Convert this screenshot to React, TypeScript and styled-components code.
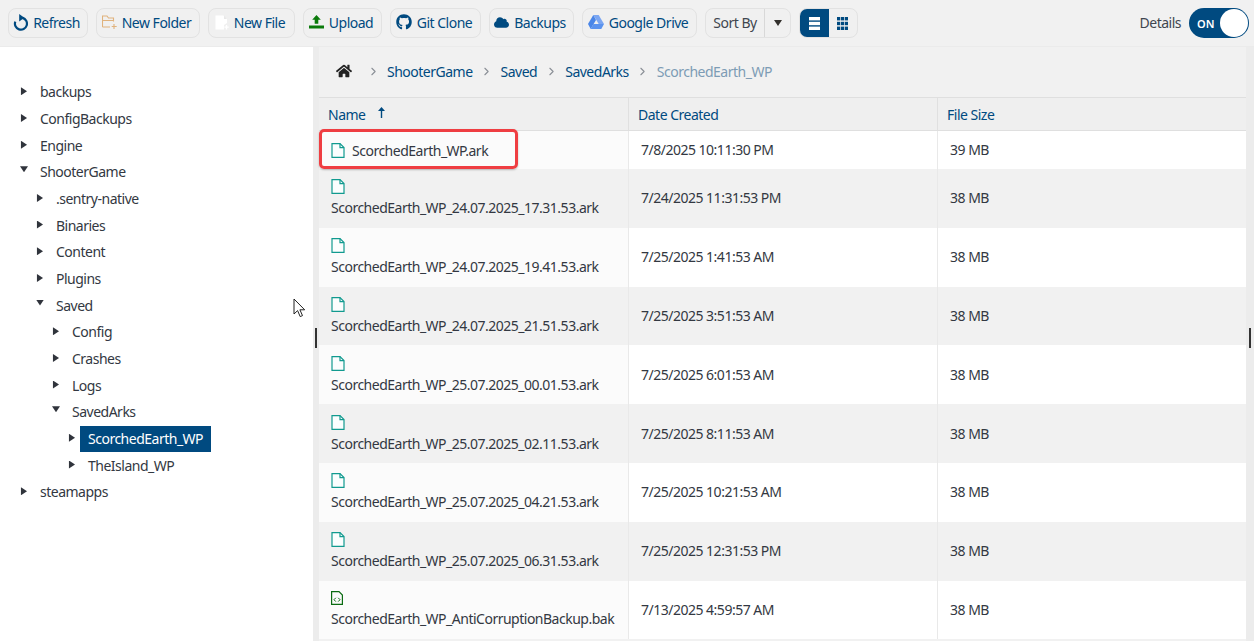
import React from "react";
import styled, { createGlobalStyle } from "styled-components";
import { FaGithub, FaCloud, FaHome } from "react-icons/fa";
import { ChevronRight } from "lucide-react";

const BLUE = "#004a80";
const INK = "#333842";

const GlobalStyle = createGlobalStyle`
  html, body {
    margin: 0;
    height: 100%;
    overflow: hidden;
    background: #f1f1f1;
  }
  body {
    font-family: "Noto Sans", "Open Sans", sans-serif;
    font-size: 14px;
    letter-spacing: -0.5px;
    color: ${INK};
  }
`;

type TreeNode = { label: string; level: number; open?: boolean; selected?: boolean };

const treeNodes: TreeNode[] = [
  { label: "backups", level: 0 },
  { label: "ConfigBackups", level: 0 },
  { label: "Engine", level: 0 },
  { label: "ShooterGame", level: 0, open: true },
  { label: ".sentry-native", level: 1 },
  { label: "Binaries", level: 1 },
  { label: "Content", level: 1 },
  { label: "Plugins", level: 1 },
  { label: "Saved", level: 1, open: true },
  { label: "Config", level: 2 },
  { label: "Crashes", level: 2 },
  { label: "Logs", level: 2 },
  { label: "SavedArks", level: 2, open: true },
  { label: "ScorchedEarth_WP", level: 3, selected: true },
  { label: "TheIsland_WP", level: 3 },
  { label: "steamapps", level: 0 },
];

const files = [
  { name: "ScorchedEarth_WP.ark", date: "7/8/2025 10:11:30 PM", size: "39 MB", inline: true },
  { name: "ScorchedEarth_WP_24.07.2025_17.31.53.ark", date: "7/24/2025 11:31:53 PM", size: "38 MB" },
  { name: "ScorchedEarth_WP_24.07.2025_19.41.53.ark", date: "7/25/2025 1:41:53 AM", size: "38 MB" },
  { name: "ScorchedEarth_WP_24.07.2025_21.51.53.ark", date: "7/25/2025 3:51:53 AM", size: "38 MB" },
  { name: "ScorchedEarth_WP_25.07.2025_00.01.53.ark", date: "7/25/2025 6:01:53 AM", size: "38 MB" },
  { name: "ScorchedEarth_WP_25.07.2025_02.11.53.ark", date: "7/25/2025 8:11:53 AM", size: "38 MB" },
  { name: "ScorchedEarth_WP_25.07.2025_04.21.53.ark", date: "7/25/2025 10:21:53 AM", size: "38 MB" },
  { name: "ScorchedEarth_WP_25.07.2025_06.31.53.ark", date: "7/25/2025 12:31:53 PM", size: "38 MB" },
  { name: "ScorchedEarth_WP_AntiCorruptionBackup.bak", date: "7/13/2025 4:59:57 AM", size: "38 MB", code: true },
];

const RefreshIcon = () => (
  <svg width="15" height="17" viewBox="0 0 15 17">
    <path d="M9.600 3.900A6 6 0 1 1 2.300 7.600" fill="none" stroke={BLUE} strokeWidth="2.200" />
    <path d="M6.200 0l5.200 3.800-5.200 3.800z" fill={BLUE} />
  </svg>
);

const NewFolderIcon = () => (
  <svg width="15" height="14" viewBox="0 0 15 14" fill="none" stroke="#e0b27c" strokeWidth="1.100">
    <path d="M.5 12V1h4.500l1.500 2h5v3.500M.5 5.500h11.500M.5 12H8" />
    <path d="M12 9v5M9.700 11.500h5" />
  </svg>
);

const NewFileIcon = () => (
  <svg width="14" height="15" viewBox="0 0 14 15">
    <path d="M.5.5h8l3.500 3.500v4l-3 2v4.500H.5z" fill="#fff" />
    <path d="M9 .5l3 3.500H9z" fill="#e8e8e8" />
    <path d="M11.500 10v4.500M9.500 12.200h4.200" stroke="#fff" strokeWidth="1.300" fill="none" />
  </svg>
);

const UploadIcon = () => (
  <svg width="15" height="14" viewBox="0 0 15 14">
    <path d="M7.500 0l4.300 4.700H9.300v4H5.700v-4H3.200z" fill="#0b7a0b" />
    <rect y="10.500" width="15" height="3" fill="#0b7a0b" />
  </svg>
);

const DriveIcon = () => (
  <svg width="16" height="14" viewBox="0 0 16 14">
    <path d="M5.300 0h5.400l5.300 9h-5.300z" fill="#7ba6f2" />
    <path d="M5.300 0L0 9l2.700 5 5.300-9z" fill="#4a86e8" />
    <path d="M2.700 14h10.600L16 9H5.400z" fill="#5b93ee" />
  </svg>
);

const ListIcon = () => (
  <svg width="11" height="13" viewBox="0 0 11 13" fill="#fff">
    <rect width="11" height="3.400" />
    <rect y="4.800" width="11" height="3.400" />
    <rect y="9.600" width="11" height="3.400" />
  </svg>
);

const GridIcon = () => (
  <svg width="11" height="13" viewBox="0 0 11 13" fill={BLUE}>
    {[0, 4.800, 9.600].map((y) =>
      [0, 3.900, 7.800].map((x) => <rect key={`${x}-${y}`} x={x} y={y} width="3.200" height="3.400" />)
    )}
  </svg>
);

const SortUpIcon = () => (
  <SortArrow width="7" height="11" viewBox="0 0 7 11">
    <path d="M3.500 0L7 4H4.200v7H2.800V4H0z" fill={BLUE} />
  </SortArrow>
);

const FileIcon = () => (
  <svg width="14" height="15" viewBox="0 0 14 15" fill="none" stroke="#119a8f" strokeWidth="1.200">
    <path d="M1 .6h8l4 4V14.400H1z" fill="#fbfefe" />
    <path d="M9 .6v4h4" />
  </svg>
);

const CodeFileIcon = () => (
  <svg width="12" height="14" viewBox="0 0 12 14" fill="none" stroke="#0a6b12" strokeWidth="1.200">
    <path d="M.6.6h7.400l3.400 3.400V13.400H.6z" />
    <path d="M4.800 6.800L3 8.700l1.800 1.900M7.200 6.800L9 8.700l-1.800 1.900" strokeWidth="1" />
  </svg>
);

const MouseCursor = () => (
  <Cursor width="13" height="20" viewBox="0 0 13 20">
    <path d="M1 1v15l3.600-3.400 2.600 6 2.300-1-2.600-5.800h4.800z" fill="#fff" stroke="#222" strokeWidth="1" />
  </Cursor>
);

const crumbs = ["ShooterGame", "Saved", "SavedArks", "ScorchedEarth_WP"];

export default function App() {
  return (
    <Page>
      <GlobalStyle />
      <Toolbar>
        <ToolButton $w={80}><RefreshIcon />Refresh</ToolButton>
        <ToolButton $w={104}><NewFolderIcon />New Folder</ToolButton>
        <ToolButton $w={87}><NewFileIcon />New File</ToolButton>
        <ToolButton $w={79}><UploadIcon />Upload</ToolButton>
        <ToolButton $w={91}><FaGithub size={16} color={BLUE} />Git Clone</ToolButton>
        <ToolButton $w={85}><FaCloud size={15} color={BLUE} />Backups</ToolButton>
        <ToolButton $w={115}><DriveIcon />Google Drive</ToolButton>
        <SplitButton>
          <SortLabel>Sort By</SortLabel>
          <SortCaret><Caret /></SortCaret>
        </SplitButton>
        <ViewGroup>
          <ViewButton $active><ListIcon /></ViewButton>
          <ViewButton><GridIcon /></ViewButton>
        </ViewGroup>
        <DetailsArea>
          <DetailsLabel>Details</DetailsLabel>
          <Switch>
            <SwitchText>ON</SwitchText>
            <SwitchKnob />
          </Switch>
        </DetailsArea>
      </Toolbar>
      <Body>
        <Sidebar>
          {treeNodes.map((node) => (
            <TreeRow key={node.label} $level={node.level}>
              <Arrow $open={node.open} />
              <TreeLabel $selected={node.selected}>{node.label}</TreeLabel>
            </TreeRow>
          ))}
          <MouseCursor />
        </Sidebar>
        <Gutter>
          <GutterHandle />
        </Gutter>
        <Main>
          <Breadcrumb>
            <HomeLink><FaHome size={16} color="#222" /></HomeLink>
            {crumbs.map((crumb, i) => (
              <React.Fragment key={crumb}>
                <Chevron><ChevronRight size={13} color="#8a8f96" /></Chevron>
                <Crumb $current={i === crumbs.length - 1}>{crumb}</Crumb>
              </React.Fragment>
            ))}
          </Breadcrumb>
          <Table>
            <HeaderRow>
              <HeaderCell>Name<SortUpIcon /></HeaderCell>
              <HeaderCell>Date Created</HeaderCell>
              <HeaderCell>File Size</HeaderCell>
            </HeaderRow>
            {files.map((file, i) => (
              <Row key={file.name} $alt={i % 2 === 1} $short={file.inline}>
                <NameCell $inline={file.inline} $alt={i % 2 === 1}>
                  {file.code ? <CodeFileIcon /> : <FileIcon />}
                  <span>{file.name}</span>
                </NameCell>
                <Cell>{file.date}</Cell>
                <Cell>{file.size}</Cell>
              </Row>
            ))}
            <Highlight />
          </Table>
        </Main>
        <EdgeBar>
          <GutterHandle />
        </EdgeBar>
      </Body>
    </Page>
  );
}

const Page = styled.div`
  width: 1254px;
  height: 641px;
  display: flex;
  flex-direction: column;
  overflow: hidden;
`;

const Toolbar = styled.div`
  height: 47px;
  box-sizing: border-box;
  padding: 8px 5px 0 8px;
  display: flex;
  align-items: flex-start;
  gap: 8px;
  background: #f1f1f1;
  border-bottom: 1px solid #ebebeb;
`;

const ToolButton = styled.button<{ $w: number }>`
  width: ${(p) => p.$w}px;
  height: 30px;
  box-sizing: border-box;
  display: flex;
  align-items: center;
  justify-content: center;
  gap: 5px;
  padding: 0 3px 2px 0;
  font: inherit;
  letter-spacing: inherit;
  color: ${BLUE};
  background: #f0f0f0;
  border: 1px solid #e2e2e2;
  border-radius: 8px;
`;

const SplitButton = styled.div`
  width: 86px;
  height: 30px;
  box-sizing: border-box;
  display: flex;
  background: #f0f0f0;
  border: 1px solid #e2e2e2;
  border-radius: 8px;
`;

const SortLabel = styled.div`
  flex: 1;
  display: flex;
  align-items: center;
  justify-content: center;
  padding-bottom: 2px;
  color: #40464f;
  border-right: 1px solid #d8d8d8;
`;

const SortCaret = styled.div`
  width: 25px;
  display: flex;
  align-items: center;
  justify-content: center;
`;

const Caret = styled.span`
  width: 0;
  height: 0;
  border-left: 4px solid transparent;
  border-right: 4px solid transparent;
  border-top: 6px solid #33302c;
`;

const ViewGroup = styled.div`
  width: 59px;
  height: 30px;
  box-sizing: border-box;
  display: flex;
  background: #f0f0f0;
  border: 1px solid #e2e2e2;
  border-radius: 8px;
  overflow: hidden;
`;

const ViewButton = styled.div<{ $active?: boolean }>`
  flex: 1;
  display: flex;
  align-items: center;
  justify-content: center;
  background: ${(p) => (p.$active ? BLUE : "transparent")};
`;

const DetailsArea = styled.div`
  margin-left: auto;
  display: flex;
  align-items: center;
  gap: 8px;
  height: 30px;
`;

const DetailsLabel = styled.span`
  padding-bottom: 2px;
  color: #40464f;
`;

const Switch = styled.div`
  width: 60px;
  height: 30px;
  box-sizing: border-box;
  padding: 1px;
  display: flex;
  align-items: center;
  justify-content: space-between;
  background: ${BLUE};
  border-radius: 15px;
`;

const SwitchText = styled.span`
  margin-left: 7px;
  font-size: 11px;
  font-weight: 600;
  letter-spacing: 0;
  color: #fff;
`;

const SwitchKnob = styled.span`
  width: 28px;
  height: 28px;
  border-radius: 50%;
  background: #fff;
`;

const Body = styled.div`
  flex: 1;
  min-height: 0;
  display: flex;
`;

const Sidebar = styled.div`
  width: 313px;
  box-sizing: border-box;
  padding-top: 32px;
  background: #fff;
  position: relative;
`;

const TreeRow = styled.div<{ $level: number }>`
  height: 26.67px;
  display: flex;
  align-items: center;
  padding-left: ${(p) => 20 + p.$level * 16}px;
`;

const Arrow = styled.span<{ $open?: boolean }>`
  width: 8px;
  height: ${(p) => (p.$open ? 6 : 8)}px;
  flex: none;
  margin-right: 4px;
  background: #30343c;
  clip-path: ${(p) =>
    p.$open ? "polygon(0 0, 100% 0, 50% 100%)" : "polygon(12% 0, 88% 50%, 12% 100%)"};
  transform: ${(p) => (p.$open ? "translateY(-3px)" : "translateY(-1px)")};
`;

const TreeLabel = styled.span<{ $selected?: boolean }>`
  height: 26px;
  line-height: 26px;
  padding: 0 8px;
  color: ${(p) => (p.$selected ? "#fff" : INK)};
  background: ${(p) => (p.$selected ? BLUE : "transparent")};
`;

const Cursor = styled.svg`
  position: absolute;
  left: 293px;
  top: 251px;
`;

const Gutter = styled.div`
  width: 6px;
  display: flex;
  align-items: flex-start;
  justify-content: center;
  padding-top: 281px;
  box-sizing: border-box;
  background: #ececec;
`;

const GutterHandle = styled.span`
  width: 2px;
  height: 20px;
  background: #333;
`;

const Main = styled.div`
  flex: 1;
  min-width: 0;
  display: flex;
  flex-direction: column;
  background: #f1f1f1;
`;

const Breadcrumb = styled.div`
  height: 51px;
  flex: none;
  box-sizing: border-box;
  padding: 0 0 2px 17px;
  display: flex;
  align-items: center;
  border-bottom: 1px solid #dfdfdf;
`;

const HomeLink = styled.span`
  display: flex;
  width: 16px;
  margin-right: 11px;
`;

const Chevron = styled.span`
  width: 20px;
  display: flex;
  justify-content: center;
`;

const Crumb = styled.span<{ $current?: boolean }>`
  margin: 0 4px;
  color: ${(p) => (p.$current ? "#7d9cb5" : BLUE)};
`;

const Table = styled.div`
  position: relative;
  flex: 1;
  min-height: 0;
`;

const HeaderRow = styled.div`
  height: 33px;
  box-sizing: border-box;
  display: grid;
  grid-template-columns: 310px 309px 308px;
  background: #efefef;
  border-bottom: 1px solid #dfdfdf;
`;

const HeaderCell = styled.div`
  padding-left: 9px;
  display: flex;
  align-items: center;
  color: ${BLUE};
  border-right: 1px solid #e0e0e0;
  &:last-child {
    border-right: none;
  }
`;

const SortArrow = styled.svg`
  margin: -4px 0 0 13px;
`;

const Row = styled.div<{ $alt?: boolean; $short?: boolean }>`
  height: ${(p) => (p.$short ? 38 : 58.8)}px;
  display: grid;
  grid-template-columns: 310px 309px 308px;
  background: ${(p) => (p.$alt ? "#f1f1f1" : "#fff")};
`;

const Cell = styled.div`
  display: flex;
  align-items: center;
  padding: 0 0 1px 12px;
  box-shadow: inset -1px 0 0 #e9e9e9;
  &:last-child {
    box-shadow: none;
  }
`;

const NameCell = styled.div<{ $inline?: boolean; $alt?: boolean }>`
  display: flex;
  flex-direction: ${(p) => (p.$inline ? "row" : "column")};
  align-items: ${(p) => (p.$inline ? "center" : "flex-start")};
  justify-content: ${(p) => (p.$inline ? "flex-start" : "center")};
  gap: ${(p) => (p.$inline ? "7px" : "4px")};
  padding-left: 12px;
  white-space: nowrap;
  background: ${(p) => (p.$alt ? "#f1f1f1" : "#fbfbfb")};
  box-shadow: inset -1px 0 0 #e9e9e9;
`;

const Highlight = styled.div`
  position: absolute;
  left: 0;
  top: 31px;
  width: 199px;
  height: 40px;
  box-sizing: border-box;
  border: 3px solid #ef3e42;
  border-radius: 5px;
  box-shadow: 0 1px 2px rgba(0, 0, 0, 0.25);
`;

const EdgeBar = styled.div`
  width: 8px;
  display: flex;
  padding-top: 281px;
  box-sizing: border-box;
  justify-content: center;
  align-items: flex-start;
  background: #ececec;
`;
